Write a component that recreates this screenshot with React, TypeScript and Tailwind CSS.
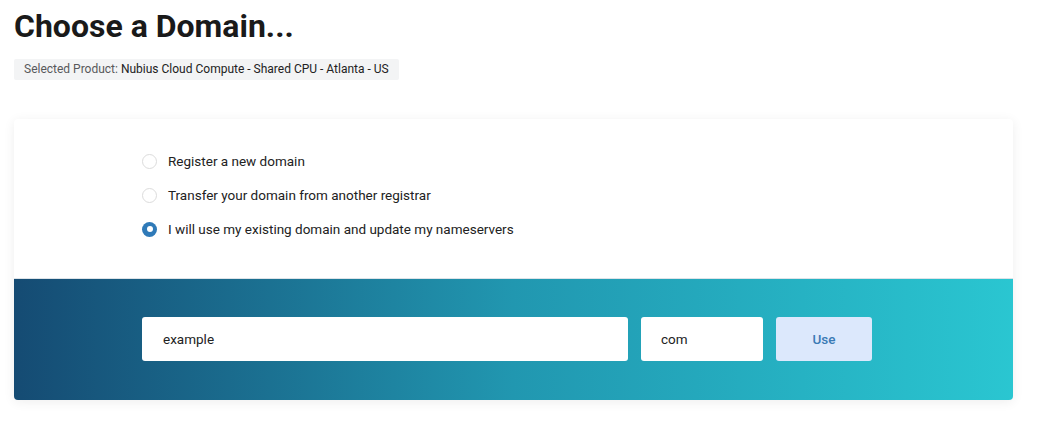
import React, { useState } from "react";

type Choice = "register" | "transfer" | "owndomain";

const options: { id: Choice; label: string }[] = [
  { id: "register", label: "Register a new domain" },
  { id: "transfer", label: "Transfer your domain from another registrar" },
  { id: "owndomain", label: "I will use my existing domain and update my nameservers" },
];

export default function App() {
  const [choice, setChoice] = useState<Choice>("owndomain");

  return (
    <div className="min-h-screen bg-white px-[14px] pr-[26px] pt-[8px] font-['Roboto',sans-serif] text-[#222]">
      <h1 className="text-[32px] font-bold leading-[36px] text-[#1a1a1a]">Choose a Domain...</h1>

      <div className="mt-[15px] inline-block rounded-[2px] bg-[#f3f4f5] px-[10px] text-[12px] leading-[21px]">
        <span className="text-[#58595b]">Selected Product: </span>
        <span className="text-[#222]">Nubius Cloud Compute - Shared CPU - Atlanta - US</span>
      </div>

      {/* DOMAIN CARD */}
      <div className="mt-[39px] overflow-hidden rounded-[4px] bg-white shadow-[0_2px_12px_rgba(0,0,0,0.07)]">
        <div className="flex flex-col gap-[14px] px-[128px] pb-[39px] pt-[32px]">
          {options.map((opt) => (
            <label key={opt.id} className="flex cursor-pointer items-center gap-[11px] text-[13.5px] leading-[20px] text-[#222]">
              <span
                onClick={() => setChoice(opt.id)}
                className={`flex h-[15px] w-[15px] items-center justify-center rounded-full ${
                  choice === opt.id ? "bg-[#2f7ab8]" : "border border-[#dcdcdc] bg-white"
                }`}
              >
                {choice === opt.id && <span className="h-[6px] w-[6px] rounded-full bg-white" />}
              </span>
              <span onClick={() => setChoice(opt.id)}>{opt.label}</span>
            </label>
          ))}
        </div>

        <div className="flex gap-[13px] border-t border-[#dde3e8] bg-gradient-to-r from-[#154b73] via-[#2197b0] to-[#2ac6d1] px-[128px] pb-[39px] pt-[38px]">
          <input
            defaultValue="example"
            className="h-[44px] w-[486px] rounded-[3px] bg-white px-[21px] text-[13.5px] text-[#222] outline-none"
          />
          <input
            defaultValue="com"
            className="h-[44px] w-[122px] rounded-[3px] bg-white px-[20px] text-[13.5px] text-[#222] outline-none"
          />
          <button className="h-[44px] w-[96px] rounded-[3px] bg-[#dce8fc] text-[13.5px] font-medium text-[#3a7ab5]">
            Use
          </button>
        </div>
      </div>
    </div>
  );
}
